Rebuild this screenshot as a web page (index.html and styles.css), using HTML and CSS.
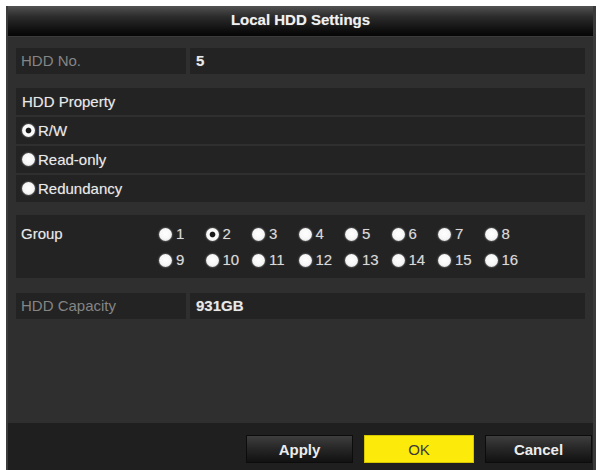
FILE: index.html
```html
<!DOCTYPE html>
<html>
<head>
<meta charset="utf-8">
<link rel="stylesheet" href="styles.css">
</head>
<body>
<div class="dialog">
  <div class="titlebar">Local HDD Settings</div>
  <div class="content">
    <div class="row pair r-no">
      <div class="cell label dim">HDD No.</div>
      <div class="cell value">5</div>
    </div>
    <div class="block prop">
      <div class="row line">HDD Property</div>
      <div class="row line"><span class="radio sel"></span>R/W</div>
      <div class="row line"><span class="radio"></span>Read-only</div>
      <div class="row line"><span class="radio"></span>Redundancy</div>
    </div>
    <div class="row group">
      <div class="glabel">Group</div>
      <div class="ggrid">
        <span class="opt"><span class="radio"></span>1</span>
        <span class="opt"><span class="radio sel"></span>2</span>
        <span class="opt"><span class="radio"></span>3</span>
        <span class="opt"><span class="radio"></span>4</span>
        <span class="opt"><span class="radio"></span>5</span>
        <span class="opt"><span class="radio"></span>6</span>
        <span class="opt"><span class="radio"></span>7</span>
        <span class="opt"><span class="radio"></span>8</span>
        <span class="opt"><span class="radio"></span>9</span>
        <span class="opt"><span class="radio"></span>10</span>
        <span class="opt"><span class="radio"></span>11</span>
        <span class="opt"><span class="radio"></span>12</span>
        <span class="opt"><span class="radio"></span>13</span>
        <span class="opt"><span class="radio"></span>14</span>
        <span class="opt"><span class="radio"></span>15</span>
        <span class="opt"><span class="radio"></span>16</span>
      </div>
    </div>
    <div class="row pair r-cap">
      <div class="cell label dim">HDD Capacity</div>
      <div class="cell value">931GB</div>
    </div>
  </div>
  <div class="footer">
    <button class="btn">Apply</button>
    <button class="btn ok">OK</button>
    <button class="btn">Cancel</button>
  </div>
</div>
</body>
</html>
```
FILE: styles.css
```css
html, body {
  margin: 0;
  padding: 0;
  background: #ffffff;
}
body {
  width: 600px;
  height: 470px;
  overflow: hidden;
  font-family: "Liberation Sans", Arial, sans-serif;
  color: #e8e8e8;
}
.dialog {
  margin: 6px 4px 0 6px;
  height: 464px;
  background: #2f2f2f;
  display: flex;
  flex-direction: column;
  border-left: 2px solid #3c3c3c;
  border-right: 3px solid #3a3a3a;
  box-sizing: border-box;
}
.titlebar {
  height: 30px;
  flex: none;
  background: linear-gradient(#525252 0%, #2c2c2c 35%, #0c0c0c 85%, #050505 100%);
  color: #f0f0f0;
  font-weight: bold;
  font-size: 15px;
  text-align: center;
  line-height: 27px;
  border-bottom: 1px solid #3a3a3a;
  text-shadow: 0 0 1px rgba(255,255,255,0.4);
}
.content {
  flex: 1;
  padding: 11px 8px 0 8px;
  display: flex;
  flex-direction: column;
  font-size: 15px;
  text-shadow: 0 0 1px rgba(255,255,255,0.35);
}
.row {
  background: #232323;
  box-sizing: border-box;
}
.pair {
  display: flex;
  height: 26px;
  gap: 4px;
  background: transparent;
}
.pair .cell {
  background: #232323;
  line-height: 26px;
  padding-left: 5px;
}
.pair .label { width: 165px; }
.pair .value { flex: 1; font-weight: bold; padding-left: 6px; }
.dim { color: #858585; text-shadow: none; }
.prop {
  margin-top: 14px;
  display: flex;
  flex-direction: column;
  gap: 2px;
}
.line {
  height: 27px;
  line-height: 26px;
  padding-left: 6px;
  display: flex;
  align-items: center;
}
.radio {
  display: inline-block;
  width: 13px;
  height: 13px;
  border-radius: 50%;
  background: radial-gradient(circle at 50% 45%, #ffffff 0%, #f6f6f6 55%, #c4c4c4 100%);
  box-shadow: 0 0 2px rgba(255,255,255,0.6);
  margin-right: 3px;
  flex: none;
}
.radio.sel {
  background: radial-gradient(circle, #1a1a1a 0%, #1a1a1a 26%, #ffffff 36%, #f4f4f4 70%, #c8c8c8 100%);
}
.group {
  margin-top: 13px;
  height: 63px;
  display: flex;
  padding: 11px 0 0 5px;
}
.glabel {
  width: 138px;
  line-height: 16px;
}
.ggrid {
  display: grid;
  grid-template-columns: repeat(8, 46.5px);
  grid-auto-rows: 26px;
  color: #d8d8d8;
}
.opt {
  display: flex;
  align-items: flex-start;
  line-height: 16px;
  font-size: 15px;
}
.opt .radio { margin-top: 2px; margin-right: 4px; }
.r-cap { margin-top: 15px; }
.footer {
  height: 47px;
  flex: none;
  background: #1f1f1f;
  display: flex;
  justify-content: flex-end;
  align-items: flex-start;
  padding: 12px 1px 0 0;
  gap: 11px;
  box-sizing: border-box;
}
.btn {
  width: 107px;
  height: 28px;
  border: 1px solid #0c0c0c;
  background: linear-gradient(#3e3e3e 0%, #282828 45%, #111111 100%);
  color: #ececec;
  font-family: "Liberation Sans", Arial, sans-serif;
  font-weight: bold;
  font-size: 15px;
  padding: 0;
}
.btn.ok {
  width: 110px;
  background: #fbea0a;
  border-color: #d6c600;
  color: #3a3a3a;
  font-weight: normal;
}
```
